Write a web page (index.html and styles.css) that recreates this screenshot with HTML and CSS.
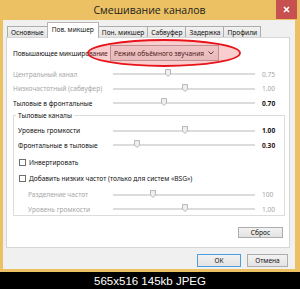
FILE: index.html
```html
<!DOCTYPE html>
<html lang="ru">
<head>
    <meta charset="UTF-8">
    <title>Смешивание каналов</title>
    <link rel="stylesheet" href="styles.css">
</head>
<body>
    <div class="window">
        <div class="titlebar">
            <span></span>
            <span class="title">Смешивание каналов</span>
            <button class="close">
                <svg width="7" height="7" viewBox="0 0 7 7"><path d="M1 1 L6 6 M6 1 L1 6" stroke="#fff" stroke-width="1.6"/></svg>
            </button>
        </div>
        <div class="client">
            <div class="tabs">
                <span class="tab">Основные</span>
                <span class="tab active">Пов. микшер</span>
                <span class="tab">Пон. микшер</span>
                <span class="tab">Сабвуфер</span>
                <span class="tab">Задержка</span>
                <span class="tab">Профили</span>
            </div>
            <div class="panel">
                <div class="upmix">
                    <span class="label">Повышающее микширование</span>
                    <div class="select">
                        <span>Режим объёмного звучания</span>
                        <svg width="6" height="4" viewBox="0 0 6 4"><path d="M0.5 0.5 L3 3 L5.5 0.5" fill="none" stroke="#333" stroke-width="1"/></svg>
                    </div>
                </div>
                <div class="slider disabled">
                    <span class="label">Центральный канал</span>
                    <div class="track"><svg class="thumb" style="left:39%" width="6" height="8" viewBox="0 0 6 8"><path d="M0.5 0.5 H5.5 V5 L3 7.5 L0.5 5 Z"/></svg></div>
                    <span class="value">0.75</span>
                </div>
                <div class="slider disabled">
                    <span class="label">Низкочастотный (сабвуфер)</span>
                    <div class="track"><svg class="thumb" style="left:51%" width="6" height="8" viewBox="0 0 6 8"><path d="M0.5 0.5 H5.5 V5 L3 7.5 L0.5 5 Z"/></svg></div>
                    <span class="value">1.00</span>
                </div>
                <div class="slider">
                    <span class="label">Тыловые в фронтальные</span>
                    <div class="track"><svg class="thumb" style="left:36%" width="6" height="8" viewBox="0 0 6 8"><path d="M0.5 0.5 H5.5 V5 L3 7.5 L0.5 5 Z"/></svg></div>
                    <span class="value strong">0.70</span>
                </div>

                <fieldset class="group">
                    <legend>Тыловые каналы</legend>
                    <div class="slider">
                        <span class="label">Уровень громкости</span>
                        <div class="track"><svg class="thumb" style="left:51%" width="6" height="8" viewBox="0 0 6 8"><path d="M0.5 0.5 H5.5 V5 L3 7.5 L0.5 5 Z"/></svg></div>
                        <span class="value strong">1.00</span>
                    </div>
                    <div class="slider">
                        <span class="label">Фронтальные в тыловые</span>
                        <div class="track"><svg class="thumb" style="left:17%" width="6" height="8" viewBox="0 0 6 8"><path d="M0.5 0.5 H5.5 V5 L3 7.5 L0.5 5 Z"/></svg></div>
                        <span class="value strong red">0.30</span>
                    </div>
                    <label class="check first"><span class="box"></span>Инвертировать</label>
                    <label class="check"><span class="box"></span>Добавить низких частот (только для систем «BSG»)</label>
                    <div class="slider disabled sub">
                        <span class="label">Разделение частот</span>
                        <div class="track"><svg class="thumb" style="left:28%" width="6" height="8" viewBox="0 0 6 8"><path d="M0.5 0.5 H5.5 V5 L3 7.5 L0.5 5 Z"/></svg></div>
                        <span class="value">100</span>
                    </div>
                    <div class="slider disabled sub">
                        <span class="label">Уровень громкости</span>
                        <div class="track"><svg class="thumb" style="left:51%" width="6" height="8" viewBox="0 0 6 8"><path d="M0.5 0.5 H5.5 V5 L3 7.5 L0.5 5 Z"/></svg></div>
                        <span class="value">1.00</span>
                    </div>
                </fieldset>

                <div class="reset-row">
                    <button class="btn reset">Сброс</button>
                </div>
            </div>
            <div class="footer">
                <button class="btn ok">ОК</button>
                <button class="btn cancel">Отмена</button>
            </div>
        </div>

        <!-- красная пометка поверх списка -->
        <svg class="mark" width="300" height="272" viewBox="0 0 300 272">
            <ellipse cx="164" cy="53" rx="76" ry="13" fill="rgba(235,60,60,0.25)" stroke="#e8141a" stroke-width="1.8"/>
        </svg>
    </div>
    <div class="watermark">565x516 145kb JPEG</div>
</body>
</html>
```

FILE: styles.css
```css
/* Общие стили */
body {
    margin: 0;
    width: 300px;
    height: 289px;
    overflow: hidden;
    background: #000;
    font-family: 'Noto Sans', 'DejaVu Sans', sans-serif;
    font-size: 6.6px;
    color: #111;
}

/* Окно Windows 8 */
.window {
    position: relative;
    height: 272px;
    padding: 0 0 3px 3px;
    box-sizing: border-box;
    background: #ecc163;
    display: flex;
    flex-direction: column;
}

.titlebar {
    height: 20px;
    display: grid;
    grid-template-columns: 1fr auto 1fr;
    align-items: center;
}

.title {
    font-family: 'Open Sans', 'Noto Sans', sans-serif;
    font-size: 10.5px;
    color: #222;
    margin-left: -4px;
}

.close {
    justify-self: end;
    align-self: start;
    width: 21px;
    height: 19px;
    margin-right: 3px;
    padding: 0;
    border: none;
    background: #c75050;
    display: flex;
    align-items: center;
    justify-content: center;
}

.client {
    width: 292px;
    height: 249px;
    background: #f0f0f0;
    display: flex;
    flex-direction: column;
}

/* Вкладки */
.tabs {
    height: 18px;
    padding: 2px 0 0 5px;
    box-sizing: border-box;
    display: flex;
    align-items: flex-end;
    position: relative;
    z-index: 1;
}

.tab {
    height: 11px;
    margin-bottom: 1px;
    padding: 0 3px;
    border: 1px solid #acacac;
    border-bottom: none;
    background: linear-gradient(#f2f2f2, #e4e4e4);
    box-sizing: border-box;
    display: flex;
    align-items: center;
    margin-left: -1px;
    white-space: nowrap;
}

.tab.active {
    height: 16px;
    margin-bottom: 0;
    padding: 0 4px 2px;
    background: #fff;
    border-color: #b5b5b5;
}

/* Панель вкладки */
.panel {
    margin: -1px 5px 0 3px;
    height: 211px;
    padding: 7px 7px 0 6px;
    box-sizing: border-box;
    background: #fff;
    border: 1px solid #d6d6d6;
    display: flex;
    flex-direction: column;
}

.upmix {
    height: 16px;
    margin-bottom: 6px;
    display: flex;
    align-items: center;
}

.upmix .label {
    width: 97px;
    flex: none;
    letter-spacing: -0.1px;
}

.select {
    width: 109px;
    height: 16px;
    padding: 0 4px 0 3px;
    box-sizing: border-box;
    border: 1px solid #adadad;
    background: linear-gradient(#f2f2f2, #e5e5e5);
    display: flex;
    align-items: center;
    justify-content: space-between;
    white-space: nowrap;
    overflow: hidden;
}

.slider {
    height: 14.5px;
    display: grid;
    grid-template-columns: 1fr 142px 20px;
    column-gap: 7px;
    align-items: center;
}

.label {
    white-space: nowrap;
}

.track {
    position: relative;
    height: 2px;
    background: #dcdcdc;
}

.thumb {
    position: absolute;
    top: -4px;
    margin-left: -3px;
}

.thumb path {
    fill: #eeeeee;
    stroke: #b8b8b8;
    stroke-width: 1;
}

.value {
    white-space: nowrap;
}

.value.strong {
    font-weight: bold;
}

.value.red {
    color: #3a1010;
}

.disabled {
    color: #a6a6a6;
}

.sub .label {
    padding-left: 10px;
}

/* Группа "Тыловые каналы" */
.group {
    margin: 0 -3px 0 0;
    padding: 3px 2px 0 4px;
    border: 1px solid #dcdcdc;
    min-width: 0;
    height: 105px;
    box-sizing: border-box;
}

.group legend {
    padding: 0 2px;
    margin-left: -2px;
    line-height: 10px;
}

.check {
    height: 14px;
    margin-top: 2px;
    padding-left: 1px;
    display: flex;
    align-items: center;
    white-space: nowrap;
}

.check.first {
    margin-top: 3px;
}

.box {
    width: 7px;
    height: 7px;
    margin-right: 3px;
    border: 1px solid #6f6f6f;
    background: #fff;
    box-sizing: border-box;
}

.check + .sub {
    margin-top: 2px;
}

/* Кнопки */
.btn {
    height: 13px;
    padding: 0;
    border: 1px solid #adadad;
    background: linear-gradient(#f2f2f2, #e3e3e3);
    font-family: inherit;
    font-size: 6.6px;
    color: #111;
}

.reset-row {
    margin-top: 11px;
    margin-right: -1px;
    display: flex;
    justify-content: flex-end;
}

.reset {
    width: 45px;
    height: 11px;
}

.footer {
    padding: 6px 7px 0 0;
    display: flex;
    justify-content: flex-end;
    gap: 6px;
}

.ok {
    width: 44px;
    border-color: #4a9ee0;
}

.cancel {
    width: 41px;
}

/* Пометка поверх скриншота */
.mark {
    position: absolute;
    top: 0;
    left: 0;
    pointer-events: none;
}

.watermark {
    height: 17px;
    display: flex;
    align-items: center;
    justify-content: center;
    color: #fff;
    font-family: 'Liberation Sans', Arial, sans-serif;
    font-size: 11.5px;
}
```
